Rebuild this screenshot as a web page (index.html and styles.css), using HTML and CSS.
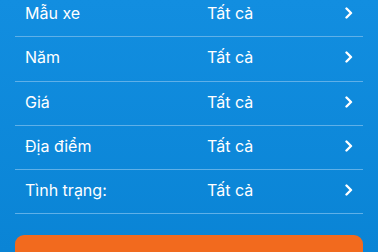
FILE: index.html
```html
<!DOCTYPE html>
<html lang="vi">
<head>
<meta charset="utf-8">
<link rel="stylesheet" href="styles.css">
</head>
<body>
<div class="screen">
  <ul class="filters">
    <li class="row"><span class="label">Mẫu xe</span><span class="value">Tất cả</span><svg class="chev" viewBox="0 0 8 12"><path d="M1.5 1.5 6 6 1.5 10.5"/></svg></li>
    <li class="row"><span class="label">Năm</span><span class="value">Tất cả</span><svg class="chev" viewBox="0 0 8 12"><path d="M1.5 1.5 6 6 1.5 10.5"/></svg></li>
    <li class="row"><span class="label">Giá</span><span class="value">Tất cả</span><svg class="chev" viewBox="0 0 8 12"><path d="M1.5 1.5 6 6 1.5 10.5"/></svg></li>
    <li class="row"><span class="label">Địa điểm</span><span class="value">Tất cả</span><svg class="chev" viewBox="0 0 8 12"><path d="M1.5 1.5 6 6 1.5 10.5"/></svg></li>
    <li class="row"><span class="label">Tình trạng:</span><span class="value">Tất cả</span><svg class="chev" viewBox="0 0 8 12"><path d="M1.5 1.5 6 6 1.5 10.5"/></svg></li>
  </ul>
  <button class="search" type="button"></button>
</div>
</body>
</html>
```
FILE: styles.css
```css
html, body {
  margin: 0;
  padding: 0;
  height: 100%;
  overflow: hidden;
}
body {
  background: linear-gradient(180deg, #128ee0 0%, #0a84d5 100%);
  font-family: Inter, "Noto Sans", "Liberation Sans", sans-serif;
  color: #fff;
}
.screen {
  padding: 0 15px;
}
.filters {
  list-style: none;
  margin: -7px 0 0;
  padding: 0;
}
.row {
  display: flex;
  align-items: center;
  box-sizing: border-box;
  height: 44.25px;
  padding: 0 10px 3px 10px;
  border-bottom: 1px solid #5fb0e8;
  font-size: 16px;
}
.label {
  width: 182px;
}
.value {
  flex: 1;
}
.chev {
  width: 8px;
  height: 12px;
  fill: none;
  stroke: #fff;
  stroke-width: 2.4;
  stroke-linecap: round;
  stroke-linejoin: round;
}
.search {
  display: block;
  width: 100%;
  height: 50px;
  margin-top: 21px;
  border: 0;
  border-radius: 9px;
  background: #f26a1e;
}
```
